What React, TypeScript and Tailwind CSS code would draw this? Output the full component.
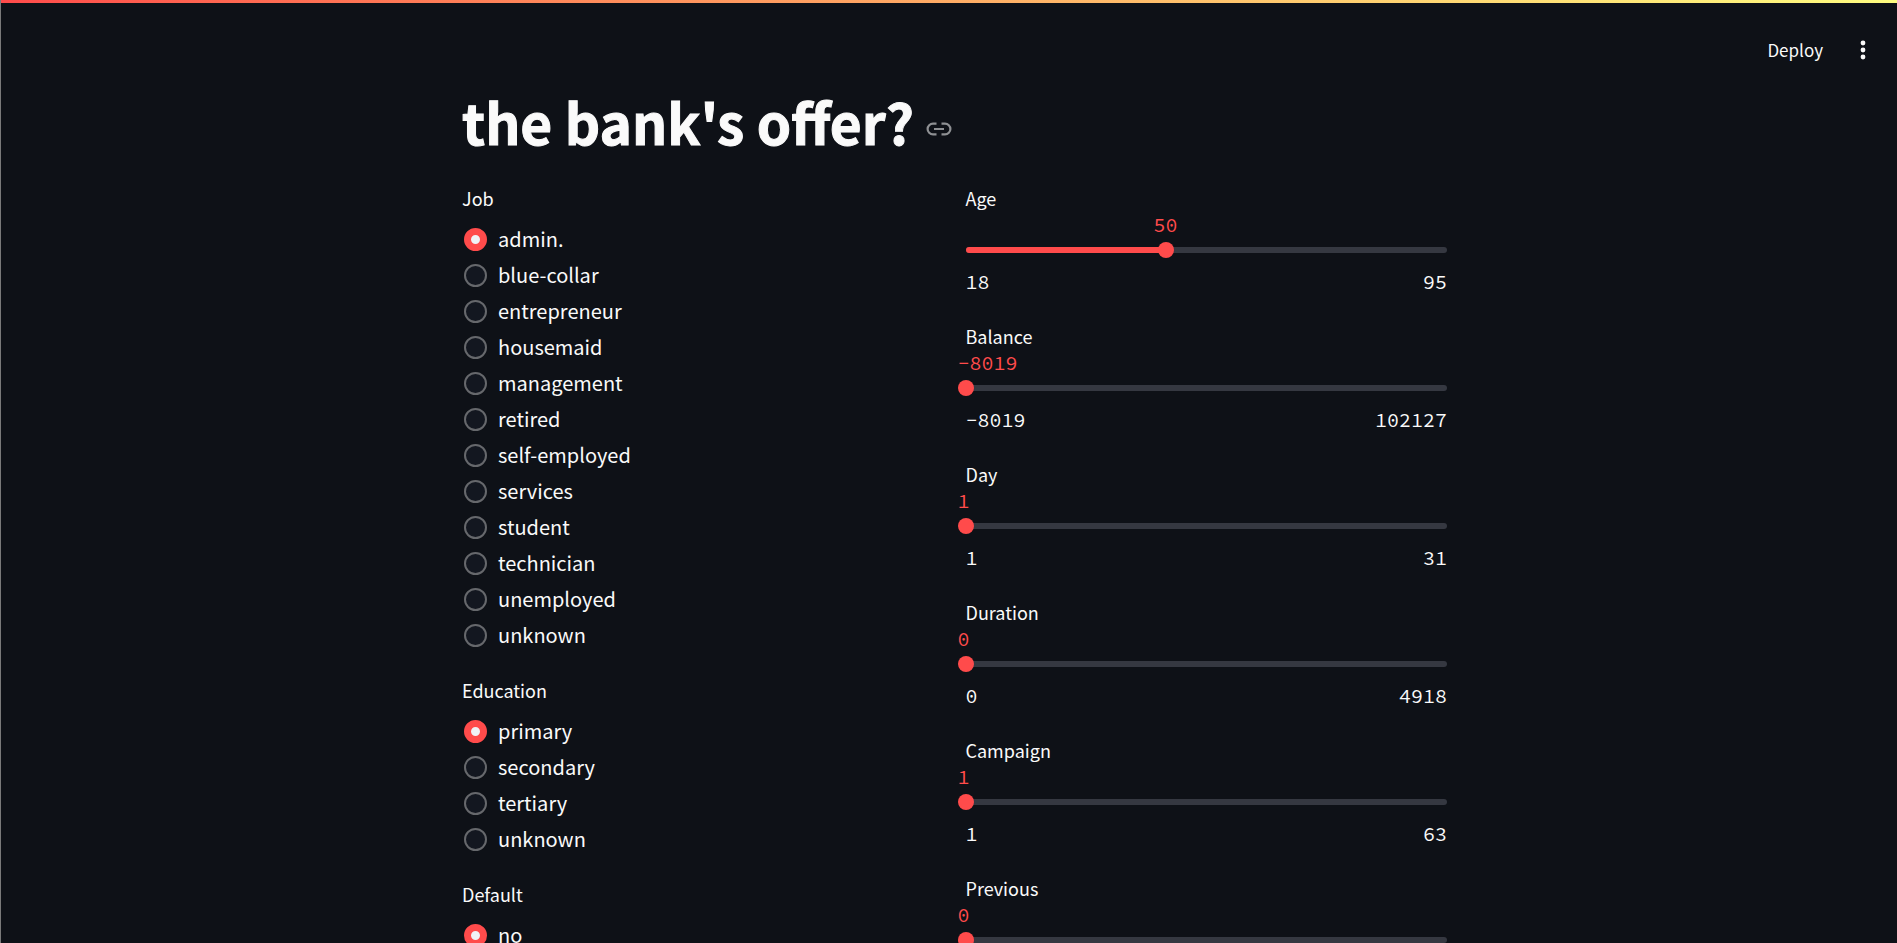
import { useState } from "react";

const SANS = "font-['Source_Sans_Pro','Noto_Sans_CJK_SC',sans-serif]";
const MONO = "font-['Source_Code_Pro','Liberation_Mono',monospace]";

type RadioField = { label: string; options: string[] };
type SliderField = { label: string; min: number; max: number; initial: number };

const radioFields: RadioField[] = [
  {
    label: "Job",
    options: [
      "admin.",
      "blue-collar",
      "entrepreneur",
      "housemaid",
      "management",
      "retired",
      "self-employed",
      "services",
      "student",
      "technician",
      "unemployed",
      "unknown",
    ],
  },
  { label: "Education", options: ["primary", "secondary", "tertiary", "unknown"] },
  { label: "Default", options: ["no", "yes"] },
];

const sliderFields: SliderField[] = [
  { label: "Age", min: 18, max: 95, initial: 50 },
  { label: "Balance", min: -8019, max: 102127, initial: -8019 },
  { label: "Day", min: 1, max: 31, initial: 1 },
  { label: "Duration", min: 0, max: 4918, initial: 0 },
  { label: "Campaign", min: 1, max: 63, initial: 1 },
  { label: "Previous", min: 0, max: 275, initial: 0 },
];

const format = (n: number) => String(n).replace("-", "\u2212");

function RadioGroup({ label, options }: RadioField) {
  const [selected, setSelected] = useState(options[0]);
  return (
    <fieldset>
      <legend className="mb-[9px] text-[18px] leading-[27px]">{label}</legend>
      <div className="flex flex-col items-start">
        {options.map((option) => (
          <label key={option} className="flex h-9 cursor-pointer items-center gap-[11px] pl-0.5 text-[20px] leading-[34px]">
            <input
              type="radio"
              name={label}
              checked={selected === option}
              onChange={() => setSelected(option)}
              className="size-[23px] shrink-0 appearance-none rounded-full border-2 border-[#66686c] bg-[#131720] checked:border-[7px] checked:border-[#ff4b4b] checked:bg-[#f0f2f6]"
            />
            {option}
          </label>
        ))}
      </div>
    </fieldset>
  );
}

function Slider({ label, min, max, initial }: SliderField) {
  const [value, setValue] = useState(initial);
  const share = (value - min) / (max - min);
  const text = format(value);
  const id = `slider-${label.toLowerCase()}`;
  const offset = value === min ? "0px" : `calc(8px + (100% - 16px) * ${share} - ${text.length / 2}ch)`;
  return (
    <div>
      <label htmlFor={id} className="block text-[18px] leading-[27px]">
        {label}
      </label>
      <div className={`-mx-2 flex text-[20px] leading-[26px] text-[#ff4b4b] ${MONO}`}>
        <output htmlFor={id} style={{ marginLeft: offset }}>
          {text}
        </output>
      </div>
      <div className="-mx-2 grid items-center pt-1">
        <div className="col-start-1 row-start-1 mx-2 h-1.5 overflow-hidden rounded-full bg-[#353841]">
          <div className="h-full bg-[#ff4b4b]" style={{ width: `${share * 100}%` }} />
        </div>
        <input
          id={id}
          type="range"
          min={min}
          max={max}
          value={value}
          onChange={(e) => setValue(Number(e.target.value))}
          className="col-start-1 row-start-1 h-4 w-full cursor-pointer appearance-none bg-transparent [&::-webkit-slider-thumb]:size-4 [&::-webkit-slider-thumb]:appearance-none [&::-webkit-slider-thumb]:rounded-full [&::-webkit-slider-thumb]:bg-[#ff4b4b]"
        />
      </div>
      <div className={`flex justify-between pt-2.5 text-[20px] leading-[27px] ${MONO}`}>
        <span>{format(min)}</span>
        <span>{format(max)}</span>
      </div>
    </div>
  );
}

export default function App() {
  return (
    <div className={`flex h-screen flex-col overflow-hidden border-l border-[#7a7a7a] bg-[#0e1117] text-[#fafafa] ${SANS}`}>
      <div className="h-[3px] shrink-0 bg-linear-to-r from-[#ff4b4b] to-[#fffd80]" />
      <header className="flex shrink-0 items-center justify-end gap-6 pt-[27px] pr-[18px]">
        <button type="button" className="text-[17px] leading-10">
          Deploy
        </button>
        <button type="button" aria-label="Main menu" className="flex size-8 items-center justify-center">
          <svg viewBox="0 0 28 28" className="size-7" fill="currentColor" aria-hidden="true">
            <circle cx="14" cy="7" r="2.4" />
            <circle cx="14" cy="14" r="2.4" />
            <circle cx="14" cy="21" r="2.4" />
          </svg>
        </button>
      </header>
      <main className="min-h-0 grow overflow-y-auto pt-4 pl-[11px] [scrollbar-width:none]">
        <div className="mx-auto max-w-[985px]">
          <h1 className="flex items-center gap-3 text-[55px] leading-[70px] font-bold [-webkit-text-stroke:1px]">
            the bank's offer?
            <a href="#the-bank-s-offer" aria-label="Link to heading" className="pt-[15px] text-[#8e9093]">
              <svg viewBox="0 0 26 14" className="h-3.5 w-[26px]" fill="none" stroke="currentColor" strokeWidth="2.2" aria-hidden="true">
                <path d="M10.5 1.6H7a5.4 5.4 0 0 0 0 10.8h3.5M15.5 1.6H19a5.4 5.4 0 0 1 0 10.8h-3.5M8 7h10" />
              </svg>
            </a>
          </h1>
          <div className="mt-[29px] grid grid-cols-2 gap-[22px] pb-24">
            <div className="flex flex-col gap-6">
              {radioFields.map((field) => (
                <RadioGroup key={field.label} {...field} />
              ))}
            </div>
            <div className="flex flex-col gap-7">
              {sliderFields.map((field) => (
                <Slider key={field.label} {...field} />
              ))}
            </div>
          </div>
        </div>
      </main>
    </div>
  );
}
